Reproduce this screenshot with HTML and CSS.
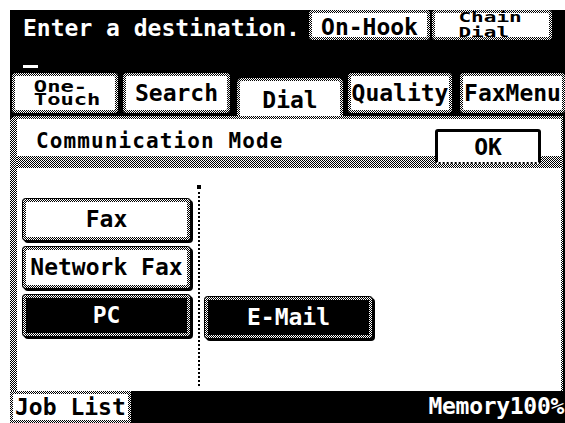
FILE: index.html
```html
<!doctype html>
<html lang="en">
	<head>
		<title>Communication Mode</title>
		<meta charset="utf-8">
		<link rel="stylesheet" href="styles.css">
	</head>

<body>

	<div class="screen">

		<!-- top bar -->
		<div class="head">
			<div class="prompt">Enter a destination.</div>
			<div class="key hook">On-Hook</div>
			<div class="key chain"><span class="small"><span class="line">Chain</span><span class="line">Dial</span></span></div>
		</div>

		<div class="entry"><span class="cursor"></span></div>

		<!-- tabs -->
		<div class="tabs">
			<div class="key tab one"><span class="small"><span class="line">One-</span><span class="line">Touch</span></span></div>
			<div class="key tab search">Search</div>
			<div class="tab dial">Dial</div>
			<div class="key tab quality">Quality</div>
			<div class="key tab faxmenu">FaxMenu</div>
		</div>

		<!-- panel -->
		<div class="panel">
			<div class="panel_head">
				<div class="title">Communication Mode</div>
				<div class="ok">OK</div>
			</div>
			<div class="band"></div>
			<div class="modes">
				<div class="col">
					<div class="btn">Fax</div>
					<div class="btn">Network Fax</div>
					<div class="btn on">PC</div>
				</div>
				<div class="divider"></div>
				<div class="col right">
					<div class="btn on">E-Mail</div>
				</div>
			</div>
		</div>

		<!-- bottom bar -->
		<div class="foot">
			<div class="key job">Job List</div>
			<div class="memory">Memory100%</div>
		</div>

	</div>

</body>
</html>
```

FILE: styles.css
```css
body { background:#fff; margin:0; overflow:hidden; }

.screen {
  margin: 10px 0 0 10px;
  width: 555px;
  height: 413px;
  background: #000;
  display: flex;
  flex-direction: column;
  font-family: "DejaVu Sans Mono", monospace;
  font-weight: bold;
  font-size: 23px;
  color: #000;
}

/* dotted ring used by most keys */
.key {
  box-sizing: border-box;
  border: 3px solid transparent;
  border-radius: 4px;
  background: linear-gradient(#fff, #fff) padding-box,
              repeating-conic-gradient(#000 0 25%, #fff 0 50%) 0 0 / 2px 2px border-box;
  display: flex;
  align-items: center;
  justify-content: center;
}

/* squashed two line labels */
.small {
  display: inline-block;
  font-size: 14px;
  text-align: left;
  transform: scaleX(1.5);
}
.small .line { display: block; height: 15px; line-height: 15px; }

/* top bar */
.head { height: 30px; display: flex; }
.prompt { width: 286px; padding: 3px 0 0 13px; color: #fff; line-height: 30px; white-space: nowrap; }
.hook { width: 121px; margin-right: 2px; padding-top: 3px; }
.chain { width: 120px; align-items: flex-start; }
.chain .small { margin: -3px 4px 0 0; }

.entry { height: 33px; }
.cursor { display: block; width: 15px; height: 3px; margin: 25px 0 0 13px; background: #fff; }

/* tabs */
.tabs { height: 43px; display: flex; align-items: flex-start; }
.tab { height: 40px; }
.tab.one { width: 106px; margin-left: 2px; }
.tab.one .small { font-size: 16px; transform: scaleX(1.38); margin-left: 4px; }
.tab.one .small .line { height: 13px; line-height: 13px; }
.tab.search { width: 107px; margin-left: 5px; }
.tab.quality { width: 104px; margin-left: 5px; }
.tab.faxmenu { width: 105px; margin-left: 8px; }

.dial {
  box-sizing: border-box;
  width: 106px;
  height: 38px;
  margin: 5px 0 0 7px;
  border: 3px solid transparent;
  border-bottom: 0;
  border-radius: 5px 5px 0 0;
  background: linear-gradient(#fff, #fff) padding-box,
              repeating-conic-gradient(#000 0 25%, #fff 0 50%) 0 0 / 2px 2px border-box;
  display: flex;
  align-items: center;
  justify-content: center;
  padding-top: 3px;
}

/* panel */
.panel {
  box-sizing: border-box;
  height: 277px;
  margin-right: 2px;
  border-style: solid;
  border-color: transparent;
  border-width: 3px 2px 0 7px;
  border-radius: 6px 0 0 0;
  background: linear-gradient(#fff, #fff) padding-box,
              repeating-conic-gradient(#000 0 25%, #fff 0 50%) 0 0 / 2px 2px border-box;
  display: flex;
  flex-direction: column;
}

.panel_head { height: 37px; display: flex; align-items: flex-start; }
.title { width: 399px; padding: 11px 0 0 19px; font-size: 21px; line-height: 22px; letter-spacing: 1.1px; white-space: nowrap; }

.ok {
  position: relative;
  box-sizing: border-box;
  width: 106px;
  height: 35px;
  margin-top: 10px;
  border: 3px solid #000;
  border-bottom: 2px dotted #000;
  border-radius: 3px;
  background: #fff;
  display: flex;
  align-items: center;
  justify-content: center;
}

.band {
  height: 12px;
  background: repeating-conic-gradient(#000 0 25%, #fff 0 50%) 0 0 / 2px 2px;
}

.modes { flex: 1; display: flex; padding-left: 6px; }
.col { width: 167px; display: flex; flex-direction: column; gap: 7px; padding-top: 31px; }
.col.right { padding-top: 129px; margin-left: 5px; }

.btn {
  box-sizing: border-box;
  height: 41px;
  border: 3px solid transparent;
  border-radius: 3px;
  background: linear-gradient(#fff, #fff) padding-box,
              repeating-conic-gradient(#000 0 25%, #fff 0 50%) 0 0 / 2px 2px border-box;
  box-shadow: 0 0 0 1px #000, 2px 2px 0 1px #000;
  display: flex;
  align-items: center;
  justify-content: center;
  white-space: nowrap;
}

.btn.on {
  color: #fff;
  background: linear-gradient(#000, #000) padding-box,
              repeating-conic-gradient(#000 0 25%, #fff 0 50%) 0 0 / 2px 2px border-box;
}

.divider {
  position: relative;
  width: 0;
  margin: 19px 0 5px 8px;
  border-left: 2px dotted #000;
}
.divider::before {
  content: "";
  position: absolute;
  top: -2px;
  left: -3px;
  width: 4px;
  height: 4px;
  background: #000;
}

/* bottom bar */
.foot { flex: 1; display: flex; align-items: stretch; }
.job { width: 121px; justify-content: flex-start; padding-left: 2px; border-radius: 0; }
.memory { flex: 1; text-align: right; color: #fff; line-height: 30px; padding-right: 1px; letter-spacing: -0.3px; }
```
